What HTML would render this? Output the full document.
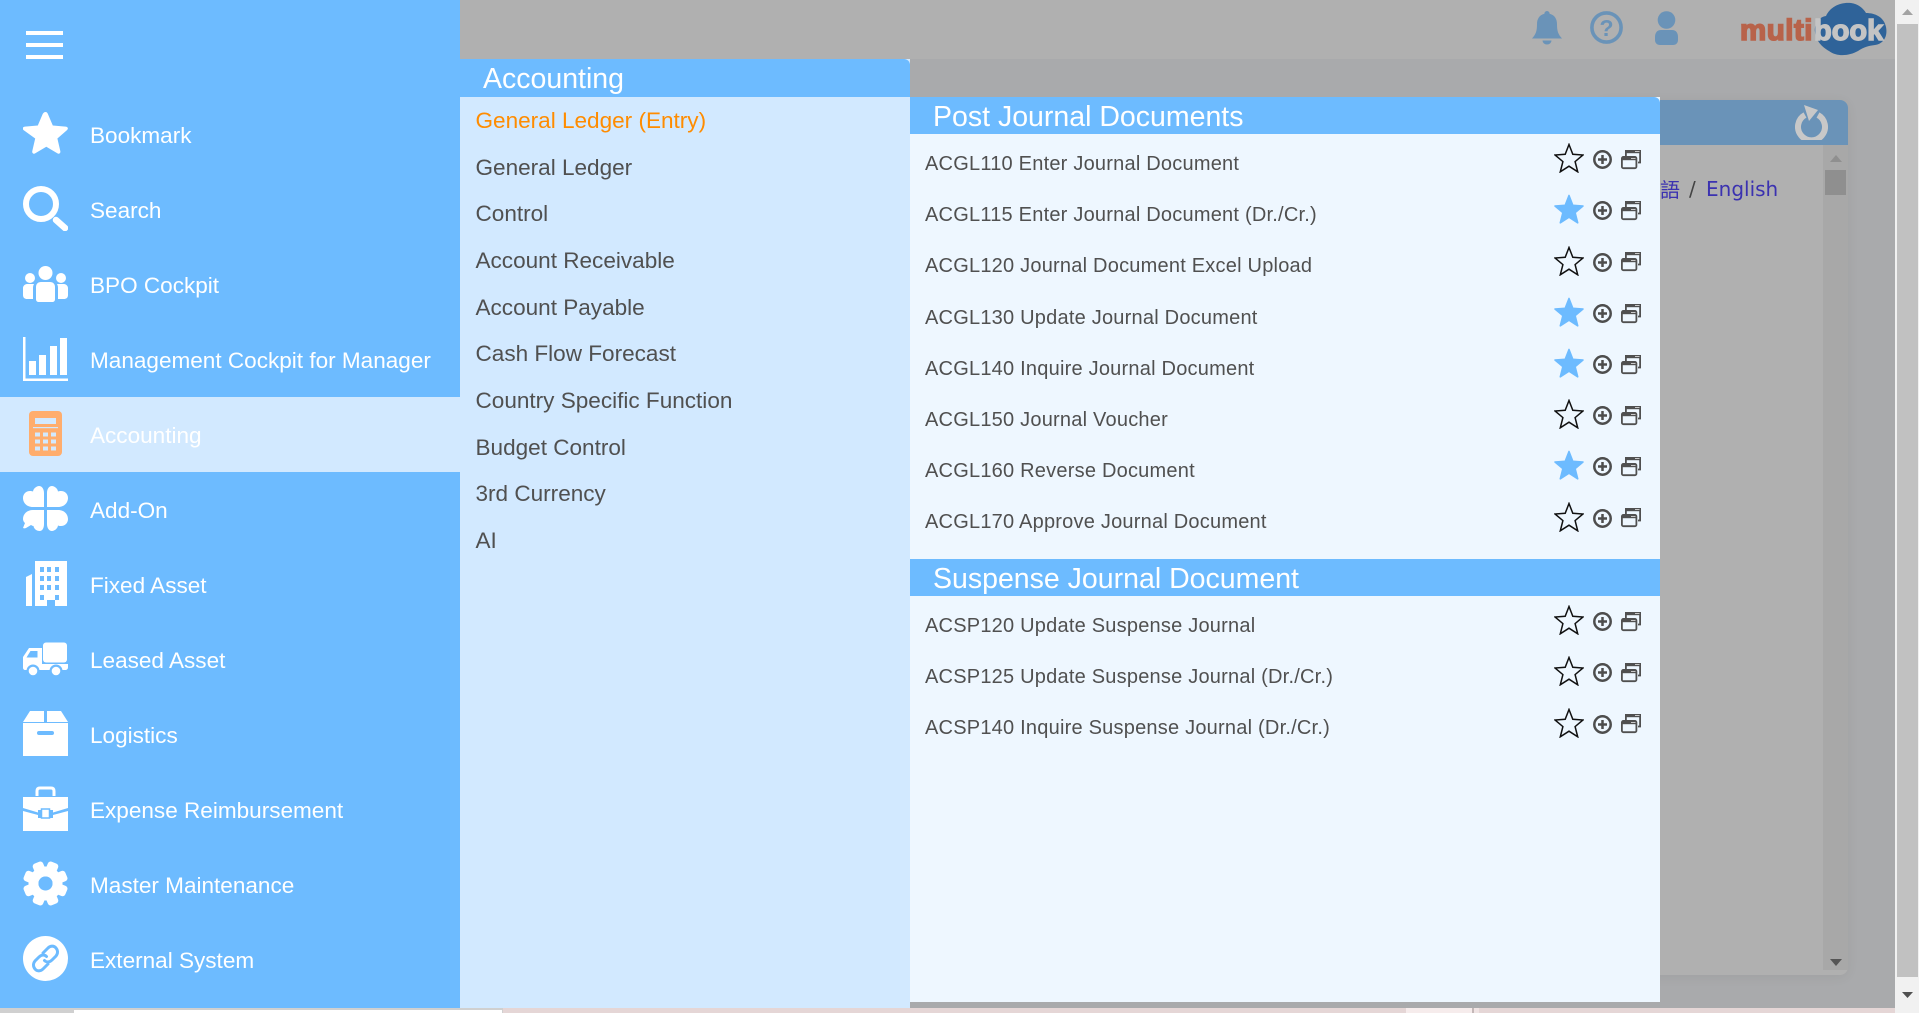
<!DOCTYPE html>
<html lang="en"><head><meta charset="utf-8"><title>multibook</title>
<style>
html,body{margin:0;padding:0;width:1919px;height:1013px;overflow:hidden;background:#a9aaac;font-family:"Liberation Sans",Arial,sans-serif}
div,span,svg{position:absolute;display:block}
.t{white-space:nowrap}
.side{left:90px;font-size:22.55px;line-height:30px;color:#fff}
.ic{left:23px;width:45px;height:45px;fill:#fff}
.m{left:475.500px;font-size:22.550px;line-height:30px;color:#505050}
.r{left:925px;font-size:20px;line-height:26px;color:#505050;letter-spacing:.22px}
.h{font-size:28.500px;line-height:36px;color:#fff}
.star{left:1554px;width:30px;height:30px}
.plus{left:1593px;width:19px;height:19px}
.win{left:1621px;width:20px;height:20px}
</style></head><body>

<!-- background page -->
<div style="left:0;top:0;width:1895px;height:59px;background:#b0b0b0"></div>
<svg style="left:1532px;top:11px;width:30px;height:34px" viewBox="0 0 30 34"><path fill="#6a93b8" d="M15 0a2.600 2.600 0 0 1 2.600 2.800C22.500 4 25 8 25 13c0 7 1 10 5 14.500H0C4 23 5 20 5 13c0-5 2.500-9 7.400-10.200A2.600 2.600 0 0 1 15 0zM10.500 29.500h9a4.500 4 0 0 1-9 0z"/></svg>
<svg style="left:1590px;top:11px;width:33px;height:33px" viewBox="0 0 33 33"><circle cx="16.500" cy="16.500" r="14.600" fill="none" stroke="#6a93b8" stroke-width="3.600"/><text x="16.500" y="25" text-anchor="middle" font-family="Liberation Sans" font-weight="bold" font-size="23" fill="#6a93b8">?</text></svg>
<svg style="left:1655px;top:11px;width:23px;height:34px" viewBox="0 0 23 34"><circle cx="11.500" cy="9" r="8.800" fill="#6a93b8"/><path fill="#6a93b8" d="M6 19h11c4 0 6 3 6 7v3c0 3-2 5-5 5H5c-3 0-5-2-5-5v-3c0-4 2-7 6-7z"/></svg>
<svg style="left:1811px;top:0;width:78px;height:58px" viewBox="0 0 78 58"><path fill="#2f6399" d="M4 32C3 24 8 17 15 16 19 7 29 2 40 3c7 1 12 5 15 10 9 0 18 4 20 14 2 10-3 17-11 18-7 1-11 2-17 6-9 5-21 6-29 0C11 47 5 41 4 32z"/></svg>
<div class="t" style="left:1740px;top:11px;font-size:29.500px;line-height:40px;font-weight:bold;color:#b8634a;letter-spacing:.5px;-webkit-text-stroke:1.600px #b8634a">multi</div>
<div class="t" style="left:1814px;top:11px;font-size:29px;line-height:40px;font-weight:bold;color:#c4c4c4;-webkit-text-stroke:1.400px #c4c4c4">book</div>

<div style="left:1600px;top:100px;width:248px;height:875px;background:#b0b0b0;border-radius:0 8px 8px 0;box-shadow:0 2px 12px rgba(0,0,0,.06)"></div>
<div style="left:1600px;top:100px;width:248px;height:45px;background:#6a93b8;border-radius:0 8px 0 0"></div>
<svg style="left:1795px;top:104px;width:33px;height:36px" viewBox="0 0 33 36"><path fill="none" stroke="#c8c8c8" stroke-width="6" d="M10 11A13.500 13.500 0 1 0 23 11"/><path fill="#c8c8c8" d="M9 1l14 5-9 11z"/></svg>
<div style="left:1823px;top:145px;width:25px;height:825px;background:#a8a8a8"></div>
<div style="left:1825px;top:170px;width:21px;height:25px;background:#8f8f8f"></div>
<svg style="left:1830px;top:155px;width:12px;height:7px" viewBox="0 0 12 7"><path d="M6 0l6 7H0z" fill="#8f8f8f"/></svg>
<svg style="left:1830px;top:959px;width:12px;height:7px" viewBox="0 0 12 7"><path d="M6 7l6-7H0z" fill="#555"/></svg>
<div class="t" style="left:1660px;top:176px;font-family:'Noto Sans CJK TC',sans-serif;font-size:20px;line-height:26px;width:20px;overflow:hidden;color:#3b32b0;direction:rtl">語</div>
<div class="t" style="left:1689px;top:176px;font-family:'DejaVu Sans',sans-serif;font-size:20px;line-height:26px;color:#444">/</div>
<div class="t" style="left:1706px;top:176px;font-family:'DejaVu Sans',sans-serif;font-size:20px;line-height:26px;color:#3b32b0">English</div>

<!-- page scrollbar -->
<div style="left:1895px;top:0;width:24px;height:1013px;background:#f1f1f1"></div>
<div style="left:1897px;top:24px;width:21px;height:953px;background:#c1c1c1"></div>
<svg style="left:1902px;top:9px;width:11px;height:6px" viewBox="0 0 11 6"><path d="M5.500 0l5.500 6H0z" fill="#a3a3a3"/></svg>
<svg style="left:1902px;top:992px;width:11px;height:6px" viewBox="0 0 11 6"><path d="M5.500 6l5.500-6H0z" fill="#505050"/></svg>

<!-- bottom strip -->
<div style="left:0;top:1008px;width:1895px;height:5px;background:#e5d6d6"></div>
<div style="left:0;top:1008px;width:503px;height:5px;background:#d0d0d0"></div>
<div style="left:74px;top:1010px;width:428px;height:3px;background:#fff"></div>
<div style="left:1406px;top:1008px;width:66px;height:5px;background:#f6ecec"></div>
<div style="left:1472px;top:1008px;width:2px;height:5px;background:#c4b8b8"></div>
<div style="left:1474px;top:1008px;width:5px;height:5px;background:#f0e4e4"></div>

<!-- sidebar -->
<div style="left:0;top:0;width:460px;height:1008px;background:#6dbbff"></div>
<div style="left:0;top:397px;width:460px;height:75px;background:#d2e9ff"></div>
<div style="left:26px;top:31px;width:37px;height:4px;background:#fff"></div>
<div style="left:26px;top:43px;width:37px;height:4px;background:#fff"></div>
<div style="left:26px;top:55px;width:37px;height:4px;background:#fff"></div>

<svg class="ic" style="top:111px" viewBox="0 0 45 45"><path d="M22.500 1c1 0 1.800.6 2.300 1.700l5 11.800 12.800 1.100c2.300.2 3 2 1.400 3.500l-9.600 8.400 2.900 12.500c.5 2.200-1.200 3.400-3 2.300l-11-6.600-11 6.600c-1.800 1.100-3.500-.1-3-2.300l2.900-12.500L.6 19.100c-1.600-1.500-.9-3.300 1.400-3.500l12.800-1.100 5-11.800C20.700 1.600 21.500 1 22.500 1z"/></svg>
<div class="t side" style="top:120.500px">Bookmark</div>

<svg class="ic" style="top:186px" viewBox="0 0 45 45"><circle cx="18" cy="18" r="15" fill="none" stroke="#fff" stroke-width="6"/><path d="M33 34l9 8" stroke="#fff" stroke-width="6.500" stroke-linecap="round"/></svg>
<div class="t side" style="top:195.500px">Search</div>

<svg class="ic" style="top:266px;height:36px" viewBox="0 0 45 36"><circle cx="22.500" cy="7" r="7"/><circle cx="7" cy="12" r="5"/><circle cx="38" cy="12" r="5"/><path d="M18 16h9c3 0 5 2 5 5v12c0 2-1 3-3 3H16c-2 0-3-1-3-3V21c0-3 2-5 5-5z"/><path d="M4 18h7c-.5 1-1 2-1 4v11H4c-2 0-4-1-4-4v-7c0-2 2-4 4-4zM34 18h7c2 0 4 2 4 4v7c0 3-2 4-4 4h-6V22c0-2-.5-3-1-4z"/></svg>
<div class="t side" style="top:270.500px">BPO Cockpit</div>

<svg class="ic" style="top:337px" viewBox="0 0 45 45"><path d="M0 0h2.500v41.500H45V44H0z"/><rect x="6" y="24" width="7" height="14"/><rect x="16" y="18" width="7" height="20"/><rect x="27" y="9" width="7" height="29"/><rect x="37" y="1" width="7" height="37"/></svg>
<div class="t side" style="top:345.500px">Management Cockpit for Manager</div>

<svg style="left:29px;top:411px;width:33px;height:45px" viewBox="0 0 33 45"><rect width="33" height="45" rx="4" fill="#ffad6d"/><rect x="6" y="7" width="21" height="6" fill="#d2e9ff"/><rect x="4" y="16" width="25" height="1.200" fill="#d2e9ff"/><g fill="#d2e9ff"><rect x="6" y="21.500" width="5" height="4"/><rect x="14" y="21.500" width="5" height="4"/><rect x="22" y="21.500" width="5" height="4"/><rect x="6" y="28.500" width="5" height="4"/><rect x="14" y="28.500" width="5" height="4"/><rect x="22" y="28.500" width="5" height="4"/><rect x="6" y="35.500" width="5" height="4"/><rect x="14" y="35.500" width="5" height="4"/><rect x="22" y="35.500" width="5" height="4"/></g></svg>
<div class="t side" style="top:420.500px">Accounting</div>

<svg class="ic" style="top:486px" viewBox="0 0 45 45"><path d="M21 21H10C3 21 0 16 0 12c0-4 3-7 7-7 1 0 2 0 3 .5C10.500 2 14 0 16 0c3 0 5 3 5 7z"/><path d="M24 21h11c7 0 10-5 10-9 0-4-3-7-7-7-1 0-2 0-3 .5C34.500 2 31 0 29 0c-3 0-5 3-5 7z"/><path d="M24 24h11c7 0 10 5 10 9 0 4-3 7-7 7-1 0-2 0-3-.5-.5 3.500-4 5.500-6 5.500-3 0-5-3-5-7z"/><path d="M21 24H10C4 24 0 28 0 33c0 1 .5 3 2 4l-2 5c1 .5 2 .5 3 0l5-3c1 .5 1.500 1 2.500 1 .5 3.500 4 5 6 5 3 0 4.500-3 4.500-7z"/></svg>
<div class="t side" style="top:495.500px">Add-On</div>

<svg class="ic" style="top:561px" viewBox="0 0 45 45"><path d="M3 16l6-3v32H3z"/><path fill-rule="evenodd" d="M12 0h32v45H32v-6h-8v6H12zM17 6h4v5h-4zM24 6h4v5h-4zM32 6h4v5h-4zM17 15h4v5h-4zM24 15h4v5h-4zM32 15h4v5h-4zM17 24h4v5h-4zM24 24h4v5h-4zM32 24h4v5h-4zM17 34h4v5h-4zM32 34h4v5h-4z"/></svg>
<div class="t side" style="top:570.500px">Fixed Asset</div>

<svg class="ic" style="top:641px;height:40px" viewBox="0 0 45 40"><rect x="20" y="1.500" width="24" height="20" rx="3"/><path fill-rule="evenodd" d="M6 7h13v16h26v3c0 2-1 3-3 3H2c-1 0-2-1-2-2V16zM7.500 10L3.500 16.500h11V10z"/><circle cx="10" cy="30" r="6.500" fill="#6dbbff"/><circle cx="33" cy="30" r="6.500" fill="#6dbbff"/><circle cx="10" cy="30" r="4.300"/><circle cx="33" cy="30" r="4.300"/></svg>
<div class="t side" style="top:645.500px">Leased Asset</div>

<svg class="ic" style="top:711px" viewBox="0 0 45 45"><path d="M7 0h14v11H0zM24 0h14l7 11H24z"/><path fill-rule="evenodd" d="M0 12h45v33H0zM16 20a1.500 1.500 0 0 0 0 4h13a1.500 1.500 0 0 0 0-4z"/></svg>
<div class="t side" style="top:720.500px">Logistics</div>

<svg class="ic" style="top:786px" viewBox="0 0 45 45"><path fill="none" stroke="#fff" stroke-width="3" d="M14 10V5c0-2 1-3 3-3h11c2 0 3 1 3 3v5"/><path d="M0 11h45v11l-15 4.500V24H15v2.500L0 22z"/><path d="M0 25l15 4v3h15v-3l15-4v20H0z"/><rect x="18.500" y="23" width="8" height="9" fill="#fff" stroke="#6dbbff" stroke-width="1.500"/></svg>
<div class="t side" style="top:795.500px">Expense Reimbursement</div>

<svg class="ic" style="top:861px" viewBox="0 0 45 45"><g transform="translate(22.500 22.500)"><rect x="-5.500" y="-22.500" width="11" height="12" rx="3" transform="rotate(22.500)"/><rect x="-5.500" y="-22.500" width="11" height="12" rx="3" transform="rotate(67.500)"/><rect x="-5.500" y="-22.500" width="11" height="12" rx="3" transform="rotate(112.500)"/><rect x="-5.500" y="-22.500" width="11" height="12" rx="3" transform="rotate(157.500)"/><rect x="-5.500" y="-22.500" width="11" height="12" rx="3" transform="rotate(202.500)"/><rect x="-5.500" y="-22.500" width="11" height="12" rx="3" transform="rotate(247.500)"/><rect x="-5.500" y="-22.500" width="11" height="12" rx="3" transform="rotate(292.500)"/><rect x="-5.500" y="-22.500" width="11" height="12" rx="3" transform="rotate(337.500)"/><circle r="12" fill="none" stroke="#fff" stroke-width="10"/></g><circle cx="22.500" cy="22.500" r="7"  fill="#6dbbff"/></svg>
<div class="t side" style="top:870.500px">Master Maintenance</div>

<svg class="ic" style="top:936px" viewBox="0 0 45 45"><circle cx="22.500" cy="22.500" r="22.500"/><g fill="none" stroke="#6dbbff" stroke-width="3" stroke-linecap="round"><path d="M20 17l5-5c2.500-2.500 6-2.500 8 0s2 5.500 0 8l-4 4c-2.500 2.500-5.500 2.500-7.500.5"/><path d="M25 28l-5 5c-2.500 2.500-6 2.500-8 0s-2-5.500 0-8l4-4c2.500-2.500 5.500-2.500 7.500-.5"/></g></svg>
<div class="t side" style="top:945.500px">External System</div>

<!-- panel 1 -->
<div style="left:460px;top:59px;width:450px;height:949px;background:#d2e9ff"></div>
<div style="left:460px;top:59px;width:450px;height:38px;background:#6dbbff;border-radius:0 6px 0 0"></div>
<div class="t h" style="left:483px;top:61px">Accounting</div>
<div class="t m" style="top:105.500px;color:#ff8c00">General Ledger (Entry)</div>
<div class="t m" style="top:152.500px">General Ledger</div>
<div class="t m" style="top:198.500px">Control</div>
<div class="t m" style="top:245.500px">Account Receivable</div>
<div class="t m" style="top:292.500px">Account Payable</div>
<div class="t m" style="top:338.500px">Cash Flow Forecast</div>
<div class="t m" style="top:385.500px">Country Specific Function</div>
<div class="t m" style="top:432.500px">Budget Control</div>
<div class="t m" style="top:478.500px">3rd Currency</div>
<div class="t m" style="top:525.500px">AI</div>

<!-- panel 2 -->
<div style="left:910px;top:97px;width:750px;height:905px;background:#eef7ff"></div>
<div style="left:910px;top:97px;width:750px;height:37px;background:#6dbbff;border-radius:0 6px 0 0"></div>
<div class="t h" style="left:933px;top:99px">Post Journal Documents</div>
<div style="left:910px;top:559px;width:750px;height:37px;background:#6dbbff"></div>
<div class="t h" style="left:933px;top:561px">Suspense Journal Document</div>

<svg width="0" height="0" style="position:absolute"><defs>
<path id="s" d="M15 1.500l3.800 9.800 10.200.7-7.900 6.600 2.600 10.200L15 23.200 6.300 28.800l2.600-10.200L1 12l10.200-.7z"/>
<g id="p"><circle cx="9.500" cy="9.500" r="8.200" fill="none" stroke="#4d4d4d" stroke-width="2.500"/><path d="M9.500 5v9M5 9.500h9" stroke="#4d4d4d" stroke-width="2.500"/></g>
<g id="w"><path fill="none" stroke="#505050" stroke-width="1.800" d="M19.100 1v11.500H17"/><rect x="4" y="0" width="16" height="3.200" fill="#505050"/><rect x="4" y="0" width="1.800" height="6" fill="#505050"/><rect x="14" y="1" width="4.500" height="1" fill="#c8c8c8"/><rect x=".9" y="6.900" width="14.500" height="11.300" rx="1.500" fill="#eef7ff" stroke="#505050" stroke-width="1.800"/><rect x=".9" y="6.900" width="14.500" height="3.300" fill="#505050"/><rect x="10" y="8" width="4.500" height="1" fill="#c8c8c8"/></g>
</defs></svg>

<div class="t r" style="top:151px">ACGL110 Enter Journal Document</div>
<div class="t r" style="top:202px">ACGL115 Enter Journal Document (Dr./Cr.)</div>
<div class="t r" style="top:253px">ACGL120 Journal Document Excel Upload</div>
<div class="t r" style="top:305px">ACGL130 Update Journal Document</div>
<div class="t r" style="top:356px">ACGL140 Inquire Journal Document</div>
<div class="t r" style="top:407px">ACGL150 Journal Voucher</div>
<div class="t r" style="top:458px">ACGL160 Reverse Document</div>
<div class="t r" style="top:509px">ACGL170 Approve Journal Document</div>
<div class="t r" style="top:613px">ACSP120 Update Suspense Journal</div>
<div class="t r" style="top:664px">ACSP125 Update Suspense Journal (Dr./Cr.)</div>
<div class="t r" style="top:715px">ACSP140 Inquire Suspense Journal (Dr./Cr.)</div>

<svg class="star" style="top:143px" viewBox="0 0 30 30"><use href="#s" fill="none" stroke="#111" stroke-width="1.500"/></svg>
<svg class="plus" style="top:150px" viewBox="0 0 19 19"><use href="#p"/></svg>
<svg class="win" style="top:150px" viewBox="0 0 20 20"><use href="#w"/></svg>

<svg class="star" style="top:194px" viewBox="0 0 30 30"><use href="#s" fill="#6dbbff" stroke="#6dbbff" stroke-width="1.600" stroke-linejoin="round"/></svg>
<svg class="plus" style="top:201px" viewBox="0 0 19 19"><use href="#p"/></svg>
<svg class="win" style="top:201px" viewBox="0 0 20 20"><use href="#w"/></svg>

<svg class="star" style="top:246px" viewBox="0 0 30 30"><use href="#s" fill="none" stroke="#111" stroke-width="1.500"/></svg>
<svg class="plus" style="top:253px" viewBox="0 0 19 19"><use href="#p"/></svg>
<svg class="win" style="top:252px" viewBox="0 0 20 20"><use href="#w"/></svg>

<svg class="star" style="top:297px" viewBox="0 0 30 30"><use href="#s" fill="#6dbbff" stroke="#6dbbff" stroke-width="1.600" stroke-linejoin="round"/></svg>
<svg class="plus" style="top:304px" viewBox="0 0 19 19"><use href="#p"/></svg>
<svg class="win" style="top:304px" viewBox="0 0 20 20"><use href="#w"/></svg>

<svg class="star" style="top:348px" viewBox="0 0 30 30"><use href="#s" fill="#6dbbff" stroke="#6dbbff" stroke-width="1.600" stroke-linejoin="round"/></svg>
<svg class="plus" style="top:355px" viewBox="0 0 19 19"><use href="#p"/></svg>
<svg class="win" style="top:355px" viewBox="0 0 20 20"><use href="#w"/></svg>

<svg class="star" style="top:399px" viewBox="0 0 30 30"><use href="#s" fill="none" stroke="#111" stroke-width="1.500"/></svg>
<svg class="plus" style="top:406px" viewBox="0 0 19 19"><use href="#p"/></svg>
<svg class="win" style="top:406px" viewBox="0 0 20 20"><use href="#w"/></svg>

<svg class="star" style="top:450px" viewBox="0 0 30 30"><use href="#s" fill="#6dbbff" stroke="#6dbbff" stroke-width="1.600" stroke-linejoin="round"/></svg>
<svg class="plus" style="top:457px" viewBox="0 0 19 19"><use href="#p"/></svg>
<svg class="win" style="top:457px" viewBox="0 0 20 20"><use href="#w"/></svg>

<svg class="star" style="top:502px" viewBox="0 0 30 30"><use href="#s" fill="none" stroke="#111" stroke-width="1.500"/></svg>
<svg class="plus" style="top:509px" viewBox="0 0 19 19"><use href="#p"/></svg>
<svg class="win" style="top:508px" viewBox="0 0 20 20"><use href="#w"/></svg>

<svg class="star" style="top:605px" viewBox="0 0 30 30"><use href="#s" fill="none" stroke="#111" stroke-width="1.500"/></svg>
<svg class="plus" style="top:612px" viewBox="0 0 19 19"><use href="#p"/></svg>
<svg class="win" style="top:612px" viewBox="0 0 20 20"><use href="#w"/></svg>

<svg class="star" style="top:656px" viewBox="0 0 30 30"><use href="#s" fill="none" stroke="#111" stroke-width="1.500"/></svg>
<svg class="plus" style="top:663px" viewBox="0 0 19 19"><use href="#p"/></svg>
<svg class="win" style="top:663px" viewBox="0 0 20 20"><use href="#w"/></svg>

<svg class="star" style="top:708px" viewBox="0 0 30 30"><use href="#s" fill="none" stroke="#111" stroke-width="1.500"/></svg>
<svg class="plus" style="top:715px" viewBox="0 0 19 19"><use href="#p"/></svg>
<svg class="win" style="top:714px" viewBox="0 0 20 20"><use href="#w"/></svg>

</body></html>
